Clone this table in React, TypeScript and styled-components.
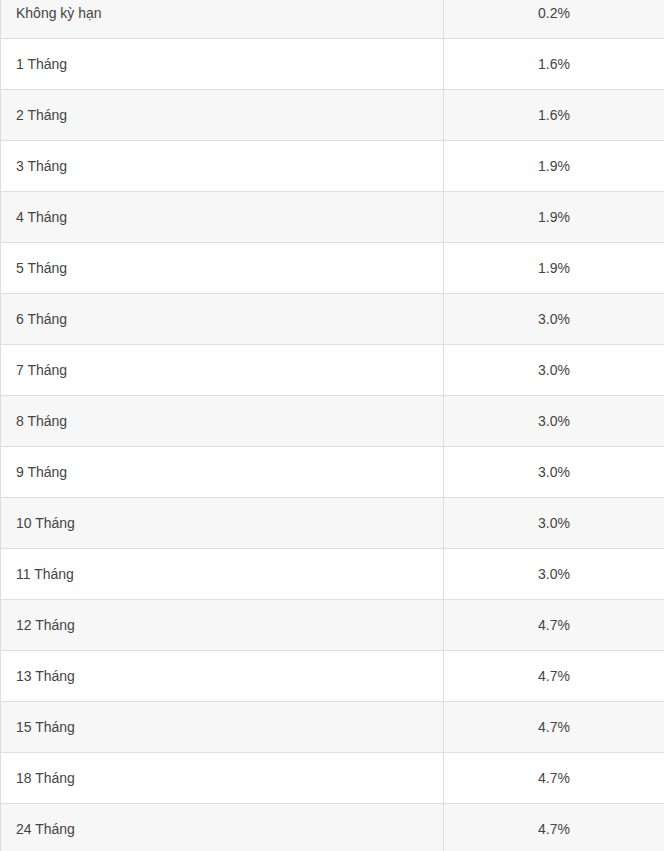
import styled, { createGlobalStyle } from "styled-components";

const GlobalStyle = createGlobalStyle`
  body {
    margin: 0;
    background: #fff;
    font-family: "Liberation Sans", Arial, sans-serif;
    overflow: hidden;
  }
`;

const Table = styled.div`
  margin-top: -12px;
  border-left: 1px solid #ddd;
  width: 663px;
`;

const Row = styled.div<{ $striped: boolean }>`
  display: grid;
  grid-template-columns: 443px 1fr;
  height: 51px;
  box-sizing: border-box;
  border-bottom: 1px solid #ddd;
  background: ${(p) => (p.$striped ? "#f7f7f7" : "#fff")};
`;

const Cell = styled.div<{ $center?: boolean }>`
  display: flex;
  align-items: center;
  justify-content: ${(p) => (p.$center ? "center" : "flex-start")};
  padding: 0 15px;
  font-size: 14px;
  color: #444;
  box-sizing: border-box;
  border-right: ${(p) => (p.$center ? "none" : "1px solid #ddd")};
`;

const rates: [string, string][] = [
  ["Không kỳ hạn", "0.2%"],
  ["1 Tháng", "1.6%"],
  ["2 Tháng", "1.6%"],
  ["3 Tháng", "1.9%"],
  ["4 Tháng", "1.9%"],
  ["5 Tháng", "1.9%"],
  ["6 Tháng", "3.0%"],
  ["7 Tháng", "3.0%"],
  ["8 Tháng", "3.0%"],
  ["9 Tháng", "3.0%"],
  ["10 Tháng", "3.0%"],
  ["11 Tháng", "3.0%"],
  ["12 Tháng", "4.7%"],
  ["13 Tháng", "4.7%"],
  ["15 Tháng", "4.7%"],
  ["18 Tháng", "4.7%"],
  ["24 Tháng", "4.7%"],
];

const App = () => {
  return (
    <>
      <GlobalStyle />
      <Table>
        {rates.map(([term, rate], i) => (
          <Row key={term} $striped={i % 2 === 0}>
            <Cell>{term}</Cell>
            <Cell $center>{rate}</Cell>
          </Row>
        ))}
      </Table>
    </>
  );
};

export default App;
